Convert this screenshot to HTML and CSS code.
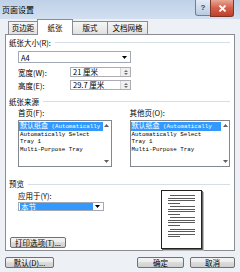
FILE: index.html
```html
<!DOCTYPE html>
<html lang="zh-CN">
<head>
  <meta charset="UTF-8">
  <title>页面设置</title>
  <link rel="stylesheet" href="styles.css">
</head>
<body>
<div class="window">
  <div class="titlebar">
    <span class="title">页面设置</span>
    <div class="caption">
      <span class="cap-btn help">?</span>
      <span class="cap-btn close">
        <svg width="9" height="7" viewBox="0 0 9 7"><path d="M1.5 0.5 L7.5 6.5 M7.5 0.5 L1.5 6.5" stroke="#fff" stroke-width="1.8"/></svg>
      </span>
    </div>
  </div>

  <div class="client">
    <div class="tabs">
      <span class="tab t1">页边距</span>
      <span class="tab t2 active">纸张</span>
      <span class="tab t3">版式</span>
      <span class="tab t4">文档网格</span>
    </div>

    <div class="panel">
      <div class="sec">纸张大小(R):</div>
      <div class="combo a4">
        <span>A4</span>
        <svg width="5" height="3" viewBox="0 0 5 3"><path d="M0 0h5L2.5 3z"/></svg>
      </div>
      <div class="row w-row">
        <label>宽度(W):</label>
        <div class="spin">
          <span class="val">21 厘米</span>
          <span class="spin-btns">
            <svg width="4" height="2" viewBox="0 0 4 2"><path d="M0 2h4L2 0z" fill="#707070"/></svg>
            <svg width="4" height="2" viewBox="0 0 4 2"><path d="M0 0h4L2 2z" fill="#707070"/></svg>
          </span>
        </div>
      </div>
      <div class="row h-row">
        <label>高度(E):</label>
        <div class="spin">
          <span class="val">29.7 厘米</span>
          <span class="spin-btns">
            <svg width="4" height="2" viewBox="0 0 4 2"><path d="M0 2h4L2 0z" fill="#707070"/></svg>
            <svg width="4" height="2" viewBox="0 0 4 2"><path d="M0 0h4L2 2z" fill="#707070"/></svg>
          </span>
        </div>
      </div>

      <div class="sec src">纸张来源</div>
      <div class="cols">
        <div class="col col1">
          <div class="col-label">首页(F):</div>
          <div class="listbox">
            <div class="items">
              <div class="item sel"><span class="cjk">默认纸盒</span> (Automatically</div>
              <div class="item">Automatically Select</div>
              <div class="item">Tray 1</div>
              <div class="item">Multi-Purpose Tray</div>
            </div>
            <div class="vscroll">
              <svg width="5" height="3" viewBox="0 0 5 3"><path d="M0 3h5L2.5 0z" fill="#606060"/></svg>
              <svg width="5" height="3" viewBox="0 0 5 3"><path d="M0 0h5L2.5 3z" fill="#606060"/></svg>
            </div>
          </div>
        </div>
        <div class="col col2">
          <div class="col-label">其他页(O):</div>
          <div class="listbox">
            <div class="items">
              <div class="item sel"><span class="cjk">默认纸盒</span> (Automatically</div>
              <div class="item">Automatically Select</div>
              <div class="item">Tray 1</div>
              <div class="item">Multi-Purpose Tray</div>
            </div>
            <div class="vscroll">
              <svg width="5" height="3" viewBox="0 0 5 3"><path d="M0 3h5L2.5 0z" fill="#606060"/></svg>
              <svg width="5" height="3" viewBox="0 0 5 3"><path d="M0 0h5L2.5 3z" fill="#606060"/></svg>
            </div>
          </div>
        </div>
      </div>

      <div class="sec pv">预览</div>
      <div class="preview">
        <div class="pv-left">
          <div class="apply-label">应用于(Y):</div>
          <div class="combo apply">
            <span class="sel-val">本节</span>
            <svg width="5" height="3" viewBox="0 0 5 3"><path d="M0 0h5L2.5 3z"/></svg>
          </div>
          <span class="btn b-print">打印选项(T)...</span>
        </div>
        <div class="page">
          <div class="para"><div class="ln first"></div><div class="ln"></div><div class="ln"></div><div class="ln last"></div></div>
          <div class="para"><div class="ln first"></div><div class="ln"></div><div class="ln"></div><div class="ln last"></div></div>
          <div class="para"><div class="ln first"></div><div class="ln"></div><div class="ln"></div><div class="ln last"></div></div>
          <div class="para"><div class="ln first"></div><div class="ln"></div><div class="ln"></div><div class="ln last"></div></div>
        </div>
      </div>
    </div>

    <div class="footer">
      <span class="btn b-def">默认(D)...</span>
      <span class="btn b-ok">确定</span>
      <span class="btn b-cancel">取消</span>
    </div>
  </div>
</div>
</body>
</html>
```

FILE: styles.css
```css
* { box-sizing: border-box; }
body { margin: 0; font-family: "Noto Sans CJK SC", "Liberation Sans", sans-serif; font-size: 7.5px; color: #000; }
.window { width: 240px; height: 272px; background: #edf0f5; overflow: hidden; }

/* title bar */
.titlebar { height: 19px; display: flex; align-items: flex-start; background: linear-gradient(#bfd1e8, #d2dff0); }
.title { margin: 5px 0 0 2px; font-size: 8px; line-height: 10px; }
.caption { margin-left: auto; margin-right: 6px; display: flex; }
.cap-btn { display: flex; align-items: center; justify-content: center; height: 16px; border: 1px solid #6f7f95; border-top: none; }
.help { width: 16px; background: linear-gradient(#e4ecf6, #b9cbe1); border-radius: 0 0 0 3px; color: #34435a; font-family: "Liberation Sans", sans-serif; font-size: 8px; font-weight: bold; }
.close { width: 24px; height: 17px; margin-left: -1px; border-color: #7b3529; background: linear-gradient(#e9a696, #d3604b 50%, #c13f2b); border-radius: 0 0 3px 0; }

/* tabs */
.client { padding: 0 5px; }
.tabs { display: flex; align-items: flex-end; height: 16px; margin-bottom: -1px; padding-left: 4px; position: relative; z-index: 1; }
.tab { height: 13px; margin-bottom: 1px; margin-left: -1px; border: 1px solid #898c95; border-bottom: none; background: linear-gradient(#f6f6f6, #e1e1e1); display: flex; align-items: center; justify-content: center; line-height: 1; }
.t1 { width: 30px; }
.t2 { width: 36px; }
.t3 { width: 36px; }
.t4 { width: 41px; }
.tab.active { height: 16px; margin-bottom: 0; background: #fff; }

/* panel */
.panel { height: 217px; border: 1px solid #898c95; background: #fff; padding: 0 4px 0 3px; display: flex; flex-direction: column; }
.sec { display: flex; align-items: center; height: 11px; margin-top: 2px; white-space: nowrap; }
.sec::after { content: ""; flex: 1; height: 1px; background: #d5dde5; margin-left: 4px; }
.sec.src { margin-top: 6px; }
.sec.pv { margin-top: 13px; height: 8px; line-height: 8px; }

.combo { display: flex; align-items: center; justify-content: space-between; border: 1px solid #a3a9b2; background: #fff; padding: 0 3px 0 2px; }
.a4 { margin: 3px 0 0 9px; width: 113px; height: 12px; }

.row { display: flex; align-items: center; margin-left: 9px; height: 10px; }
.w-row { margin-top: 4px; }
.h-row { margin-top: 3px; }
.row label { width: 52px; }
.spin { width: 61px; height: 10px; border: 1px solid #abadb3; display: flex; align-items: center; }
.spin .val { flex: 1; padding-left: 2px; line-height: 1; }
.spin-btns { width: 10px; height: 100%; display: flex; flex-direction: column; align-items: center; justify-content: center; gap: 1px; background: #f0f0f0; border-left: 1px solid #d4d4d4; }

/* paper source */
.cols { display: flex; gap: 18px; margin: 1px 0 0 9px; }
.col1 { width: 95px; }
.col2 { width: 102px; }
.col-label { height: 10px; line-height: 10px; }
.listbox { margin-top: 2px; height: 47px; border: 1px solid #828790; display: flex; }
.items { flex: 1; overflow: hidden; padding-top: 1px; font-family: "Liberation Mono", monospace; font-size: 5.8px; line-height: 7.7px; white-space: nowrap; }
.item { padding-left: 1px; }
.item.sel { background: #3399ff; color: #fff; }
.item .cjk { font-family: "Noto Sans CJK SC", sans-serif; font-size: 7px; }
.vscroll { width: 8px; display: flex; flex-direction: column; justify-content: space-between; align-items: center; padding: 3px 0; }

/* preview */
.preview { flex: 1; display: flex; }
.pv-left { display: flex; flex-direction: column; padding-bottom: 2px; }
.apply-label { margin: 3.5px 0 0 9px; line-height: 7px; height: 7px; }
.apply { margin: 3.5px 0 0 9px; width: 86px; height: 9px; padding: 0 3px 0 1px; }
.sel-val { width: 73px; height: 7px; line-height: 7px; background: #3399ff; color: #fff; padding-left: 1px; }
.b-print { margin: auto 0 0 1px; width: 56px; }
.page { margin: 2px 28px 0 auto; width: 41px; height: 59px; border: 1px solid #222; background: #fff; box-shadow: 1px 1px 0 #666, 2px 2px 0 #bbb; padding: 4px 6px 0 6px; }
.para { margin-bottom: 2.7px; }
.ln { height: 1px; background: #5a5a5a; margin-bottom: 1.5px; }
.ln.first { margin-left: 2px; }
.ln.last { width: 45%; }

/* buttons */
.btn { height: 11px; border: 1px solid #707070; border-radius: 2px; background: linear-gradient(#f3f3f3, #ebebeb 50%, #dcdcdc 50%, #cfcfcf); display: flex; align-items: center; justify-content: center; line-height: 1; white-space: nowrap; }
.footer { display: flex; padding-top: 6px; }
.b-def { width: 49px; }
.b-ok { margin-left: auto; width: 47px; border-color: #3c7fb1; }
.b-cancel { margin-left: 6px; width: 45px; }
```
